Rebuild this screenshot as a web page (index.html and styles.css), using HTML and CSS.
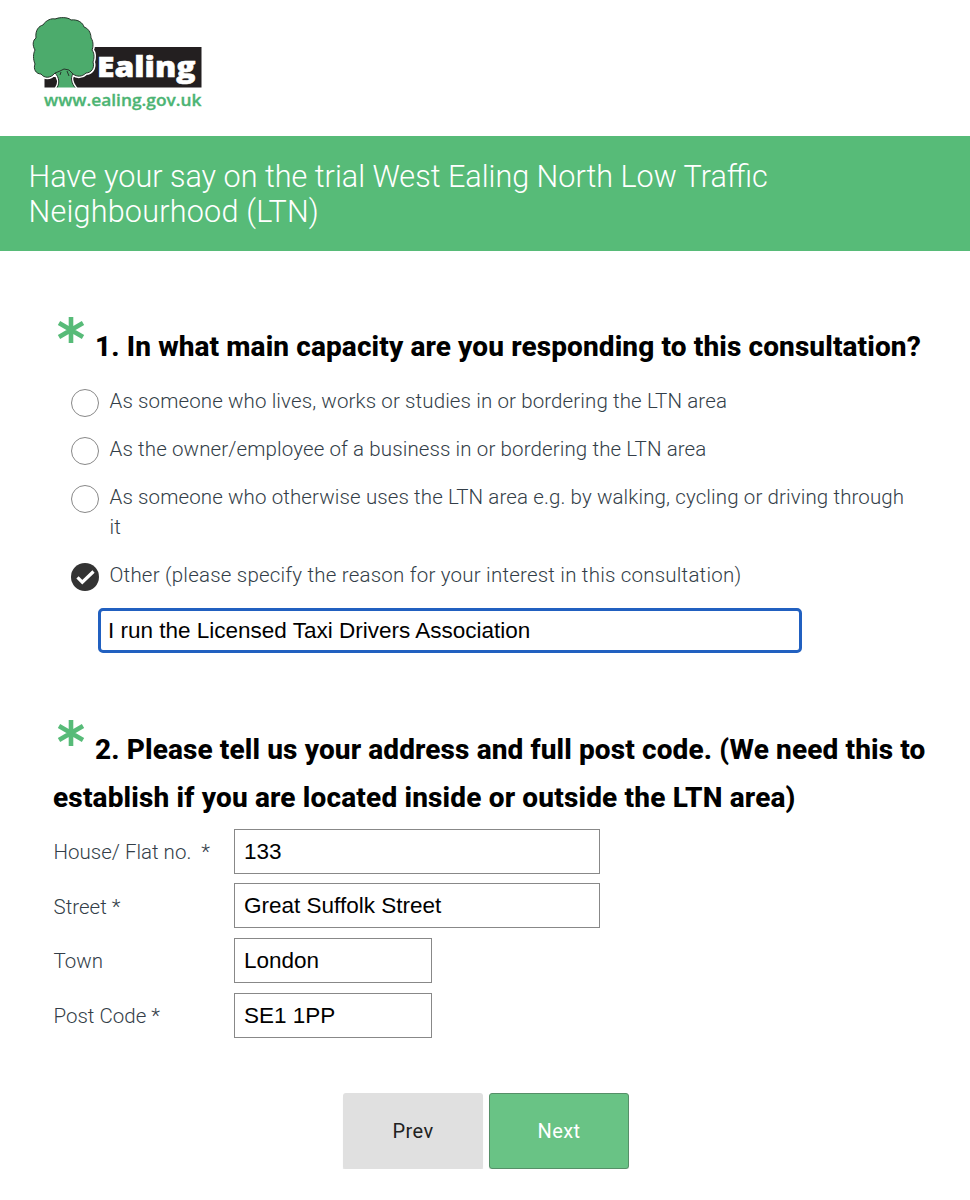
FILE: index.html
```html
<!DOCTYPE html>
<html lang="en">
<head>
<meta charset="utf-8">
<title>Have your say on the trial West Ealing North Low Traffic Neighbourhood (LTN)</title>
<link rel="stylesheet" href="styles.css">
</head>
<body>
<header class="brand">
  <svg class="logo" width="180" height="104" viewBox="27 10 180 104" role="img" aria-label="Ealing">
    <path fill="#231f20" d="M44.500 87.500V72H90L94 47H201.500V87.500Z"/>
    <path fill="#4cab6c" stroke="#fff" stroke-width="4" d="M57 88C60 83 59 77 55 73C50 79 44 78 41 74C36 74 33 69 35 64C33 59 33 54 35 50C32 45 33 40 36 38C35 30 39 26 43 25C46 20 52 18 55 19C60 17 68 17 71 20C78 19 83 23 84 27C90 29 91 35 91 38C94 42 93 48 92 50C95 54 94 59 93 62C95 68 91 73 86 73C82 77 77 77 73 74C70 78 72 84 75 88Z"/>
    <path fill="#4cab6c" stroke="#26352b" stroke-width="1" stroke-linejoin="round" d="M57 87.500C60 83 59 77 55 73C50 79 44 78 41 74C36 74 33 69 35 64C33 59 33 54 35 50C32 45 33 40 36 38C35 30 39 26 43 25C46 20 52 18 55 19C60 17 68 17 71 20C78 19 83 23 84 27C90 29 91 35 91 38C94 42 93 48 92 50C95 54 94 59 93 62C95 68 91 73 86 73C82 77 77 77 73 74C70 78 72 84 75 87.500"/>
    <path fill="none" stroke="#26352b" stroke-width="1" d="M55 73L60 71L64 69L69 70L73 74M67 71L69 76M61 72L60 75"/>
    <text class="logo-name" x="97" y="76.500" textLength="98.500" lengthAdjust="spacingAndGlyphs">Ealing</text>
    <text class="logo-url" x="44" y="106" textLength="157.500" lengthAdjust="spacingAndGlyphs">www.ealing.gov.uk</text>
  </svg>
</header>
<h1 class="title">Have your say on the trial West Ealing North Low Traffic<br><span class="title-end">Neighbourhood (LTN)</span></h1>
<main class="survey">
  <section class="question">
    <h2 class="prompt"><svg class="star" viewBox="0 0 26 26"><path d="M13 0V26M1 6L25 20M25 6L1 20"/></svg>1. In what main capacity are you responding to this consultation?</h2>
    <div class="options">
      <div class="option"><span class="radio"></span><span>As someone who lives, works or studies in or bordering the LTN area</span></div>
      <div class="option"><span class="radio"></span><span>As the owner/employee of a business in or bordering the LTN area</span></div>
      <div class="option"><span class="radio"></span><span>As someone who otherwise uses the LTN area e.g. by walking, cycling or driving through<br>it</span></div>
      <div class="option selected"><svg class="checked" viewBox="0 0 28 28"><circle cx="14" cy="14" r="14"/><path d="M6.500 14.300L11.300 19.200L22.500 8.500"/></svg><span>Other (please specify the reason for your interest in this consultation)</span></div>
    </div>
    <div class="field other">I run the Licensed Taxi Drivers Association</div>
  </section>
  <section class="question second">
    <h2 class="prompt"><svg class="star" viewBox="0 0 26 26"><path d="M13 0V26M1 6L25 20M25 6L1 20"/></svg>2. Please tell us your address and full post code. (We need this to<br><span class="prompt-end">establish if you are located inside or outside the LTN area)</span></h2>
    <div class="address">
      <span class="name">House/ Flat no.&nbsp; *</span><div class="field">133</div>
      <span class="name">Street *</span><div class="field">Great Suffolk Street</div>
      <span class="name">Town</span><div class="field short">London</div>
      <span class="name">Post Code *</span><div class="field short">SE1 1PP</div>
    </div>
  </section>
  <nav class="actions"><button class="btn prev">Prev</button><button class="btn next">Next</button></nav>
</main>
</body>
</html>
```
FILE: styles.css
```css
* { box-sizing: border-box; }
body { margin: 0; background: #fff; color: #000; font-family: Roboto, "Open Sans", sans-serif; }
.brand { height: 136px; padding: 10px 27px; }
.logo { display: block; }
.logo-name { font: 800 29px "Open Sans", sans-serif; fill: #fff; stroke: #fff; stroke-width: 0.6; }
.logo-url { font: 600 16px "Open Sans", sans-serif; fill: #4cb473; stroke: #4cb473; stroke-width: 0.3; }
.title { margin: 0; height: 115px; padding: 23px 28.5px; background: #57bb78; color: #fff; font-size: 30.55px; font-weight: 300; line-height: 35px; white-space: nowrap; }
.title-end { letter-spacing: 0.22px; }
.survey { padding: 72px 53px 0; }
.prompt { margin: 0; font-size: 28px; font-weight: 800; line-height: 48px; letter-spacing: 0.11px; white-space: nowrap; }
.prompt-end { letter-spacing: 0.16px; }
.star { width: 26px; height: 26px; margin: -13px 11px 0 5px; vertical-align: 13px; overflow: visible; }
.star path { fill: none; stroke: #57bb78; stroke-width: 4.6; }
.options { display: flex; flex-direction: column; gap: 17px; padding: 14.6px 0 0 18px; }
.option { display: flex; align-items: flex-start; gap: 10.5px; font-size: 20.5px; font-weight: 300; line-height: 30.7px; letter-spacing: 0.115px; color: #333e48; white-space: nowrap; }
.option.selected { letter-spacing: 0.21px; }
.radio { width: 28px; height: 28px; margin-top: 3px; border: 1.5px solid #888; border-radius: 50%; flex: none; }
.checked { width: 28px; height: 28px; margin-top: 3px; flex: none; fill: #333; }
.checked path { fill: none; stroke: #fff; stroke-width: 3.2; }
.field { width: 366px; height: 45px; padding: 0 9px; border: 1.5px solid #888; font: 22.5px/43px "Liberation Sans", Arial, sans-serif; white-space: nowrap; }
.field.other { width: 704px; margin: 16.6px 0 0 45px; padding: 0 7px; border: 3px solid #2160c0; border-radius: 5px; line-height: 39px; }
.field.short { width: 198px; }
.second { margin-top: 73.2px; }
.address { display: grid; grid-template-columns: 181px auto; row-gap: 9.600px; align-items: center; justify-items: start; padding-top: 7px; }
.name { padding: 2px 0 0 0.5px; font-size: 20.5px; font-weight: 300; color: #333e48; }
.actions { display: flex; justify-content: center; gap: 6px; margin-top: 55.500px; padding-left: 2px; }
.btn { width: 140px; height: 76px; border: 0; border-radius: 3px; font: 400 20px Roboto, sans-serif; letter-spacing: 0.4px; box-shadow: 0 3px 1px #e6e6e6; }
.prev { background: #e0e0e0; color: #222; }
.next { background: #69c385; border: 1px solid #568f68; color: #fff; }
```
